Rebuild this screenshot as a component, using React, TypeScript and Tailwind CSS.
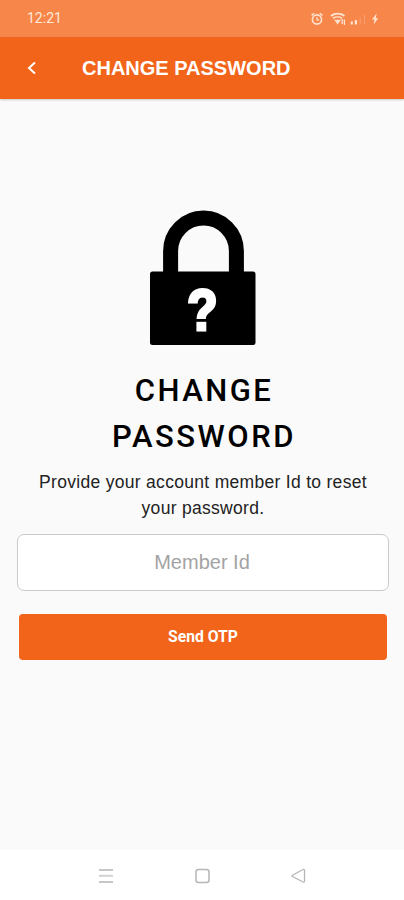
function StatusIcons() {
  return (
    <svg width="72" height="16" viewBox="0 0 72 16" fill="none" stroke="#ffe3d0" aria-hidden="true">
      {/* alarm */}
      <circle cx="7" cy="8.5" r="4.6" strokeWidth="1.6" />
      <path d="M1.6 4.4 4.2 2.2M12.4 4.4 9.8 2.2" strokeWidth="1.5" />
      <path d="M7 6v2.8h2" strokeWidth="1.2" />
      {/* wifi */}
      <path d="M21 4.9C25 1.9 30.400 1.900 34.400 4.900" strokeWidth="2" />
      <path d="M22.900 7.300c2.600-1.800 6.600-1.800 9.200 0" strokeWidth="1.600" />
      <path d="M24.200 8.800h6.800l-3.400 4.600z" fill="#ffe3d0" stroke="none" />
      <path d="M32.200 8v5M34.400 8.500v5.500" strokeWidth="1.300" />
      {/* signal */}
      <path d="M41.800 10.600v3M45.900 9v4.600" strokeWidth="2.200" />
      <path d="M50.200 6.500v7M54.500 3.500v10" strokeWidth="1.200" opacity="0.250" />
      {/* charging */}
      <path d="M66.600 2.500 62 8.600h2.500l-.8 5 4.500-6.400h-2.500z" fill="#ffe3d0" stroke="none" />
    </svg>
  );
}

function LockIcon() {
  return (
    <svg width="106" height="136" viewBox="0 0 106 136" className="shrink-0" aria-hidden="true">
      <path d="M20.600 64V41a32.900 33 0 0 1 65.800 0v23" fill="none" stroke="#000" strokeWidth="15" />
      <rect y="61.500" width="105.500" height="73.500" rx="2.500" fill="#000" />
      <text
        transform="translate(52.500 120) scale(0.87 1)"
        textAnchor="middle"
        fill="#fff"
        stroke="#fff"
        strokeWidth="3.200"
        className="text-[57px] font-bold"
      >
        ?
      </text>
      {/* keeps the dot clear of the hook */}
      <rect x="42" y="109" width="22" height="2.800" fill="#000" />
    </svg>
  );
}

function NavBar() {
  return (
    <nav className="flex h-[50px] items-center justify-center bg-white pt-[2px]">
      <svg width="208" height="18" viewBox="0 0 208 18" fill="none" stroke="#b5b5b5" strokeWidth="1.500">
        <path d="M1 3h14M1 15h14" />
        <path d="M1 8.800h14" stroke="#d2d2d2" strokeWidth="2" />
        <rect x="98" y="2.500" width="13" height="13" rx="2.500" />
        <path d="M194.500 8.300 205 2.500q1.500-.5 1.500 1v10.500q0 1.500-1.500 1l-10.500-5.500q-1-.6 0-1.200z" strokeWidth="1.300" />
      </svg>
    </nav>
  );
}

export default function App() {
  return (
    <div className="flex h-[900px] w-full flex-col bg-[#fafafa] font-['Liberation_Sans',sans-serif]">
      <div className="flex h-[37px] shrink-0 items-center justify-between bg-[#f7864b] pr-[22px] pl-[27px]">
        <span className="font-[Roboto] text-[14px] text-[#ffe9da]">12:21</span>
        <StatusIcons />
      </div>
      <header className="flex h-[62px] shrink-0 items-center bg-[#f26419] pl-[27px] text-white shadow-[0_1px_2px_rgba(0,0,0,0.2)]">
        <button type="button" aria-label="Back">
          <svg width="10" height="14" viewBox="0 0 10 14" fill="none" stroke="currentColor" strokeWidth="2">
            <path d="M8 1.500 2 7l6 5.500" />
          </svg>
        </button>
        <h1 className="ml-[45px] text-[20px] font-bold whitespace-nowrap">CHANGE PASSWORD</h1>
      </header>

      <main className="flex flex-1 flex-col items-center pt-[111px] pr-[15px] pl-[17px]">
        <LockIcon />
        <h2 className="mt-[22px] pl-[2px] text-center font-[Roboto] text-[31px] leading-[46px] font-medium tracking-[2.5px] text-black">
          CHANGE
          <br />
          PASSWORD
        </h2>
        <p className="mt-[9px] text-center text-[17.5px] leading-[26px] tracking-[0.3px] whitespace-nowrap text-[#222]">
          Provide your account member Id to reset
          <br />
          your password.
        </p>
        <input
          type="text"
          placeholder="Member Id"
          className="mt-[13px] h-[57px] w-full rounded-[7px] border-[1.500px] border-[#c9c9c9] bg-white pr-[2px] text-center text-[20px] outline-none placeholder:text-[#a3a3a3]"
        />
        <button
          type="button"
          className="mt-[23px] h-[46px] w-[368px] rounded-[4px] bg-[#f26419] font-[Roboto] text-[15.7px] font-bold text-white"
        >
          Send OTP
        </button>
      </main>

      <NavBar />
    </div>
  );
}
